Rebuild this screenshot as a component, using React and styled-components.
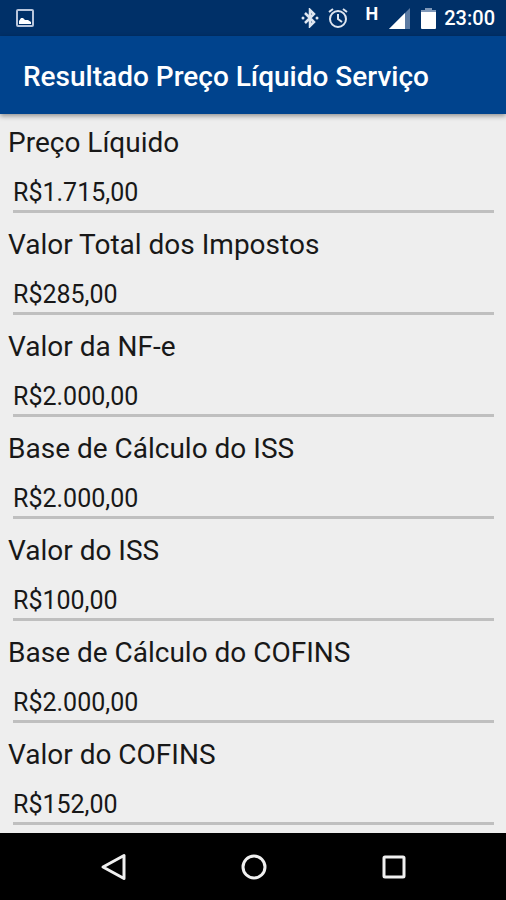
import React from "react";
import styled, { createGlobalStyle } from "styled-components";

const GlobalStyle = createGlobalStyle`
  * {
    box-sizing: border-box;
  }
  body {
    margin: 0;
    background: #eeeeee;
    font-family: Roboto, "Liberation Sans", sans-serif;
  }
`;
const Page = styled.div`
  min-height: 100vh;
  display: flex;
  flex-direction: column;
`;
const StatusBar = styled.div`
  height: 36px;
  padding: 0 11px 0 16px;
  background: #003068;
  color: #ffffff;
  display: flex;
  align-items: center;
  justify-content: space-between;
  svg {
    display: block;
  }
`;
const StatusIcons = styled.div`
  display: flex;
  align-items: center;
`;
const Alarm = styled.div`
  margin-left: 8px;
`;
const Signal = styled.div`
  display: flex;
  align-items: flex-start;
  gap: 11px;
  margin: 0 11px 0 17px;
`;
const Network = styled.span`
  font-size: 18px;
  line-height: 12px;
  font-weight: 700;
`;
const Clock = styled.span`
  margin-left: 8px;
  font-size: 20px;
  line-height: 24px;
  font-weight: 500;
`;
const AppBar = styled.header`
  height: 78px;
  padding: 4px 23px 0;
  background: #00438d;
  box-shadow: 0 2px 5px rgba(0, 0, 0, 0.4);
  display: flex;
  align-items: center;
`;
const Title = styled.h1`
  margin: 0;
  color: #ffffff;
  font-size: 28px;
  line-height: 36px;
  font-weight: 500;
`;
const Results = styled.main`
  flex: 1;
  padding: 11px 8px 8px;
  display: flex;
  flex-direction: column;
  gap: 14px;
`;
const Field = styled.div`
  display: flex;
  flex-direction: column;
`;
const Label = styled.label`
  color: #181818;
  font-size: 28px;
  line-height: 36px;
`;
const Value = styled.input`
  height: 52px;
  margin: 0 4px 0 5px;
  padding: 13px 0 0;
  border: 0;
  border-bottom: 3px solid #bfbfbf;
  border-radius: 0;
  outline: none;
  background: transparent;
  color: #181818;
  font-family: inherit;
  font-size: 25px;
`;
const NavBar = styled.nav`
  height: 67px;
  padding: 0 42px 0 44px;
  background: #000000;
  display: flex;
`;
const NavButton = styled.button`
  flex: 1;
  padding: 0;
  border: 0;
  background: transparent;
  display: flex;
  align-items: center;
  justify-content: center;
`;

const fields = [
  { id: "precoLiquido", label: "Preço Líquido", value: "R$1.715,00" },
  { id: "totalImpostos", label: "Valor Total dos Impostos", value: "R$285,00" },
  { id: "valorNfe", label: "Valor da NF-e", value: "R$2.000,00" },
  { id: "baseIss", label: "Base de Cálculo do ISS", value: "R$2.000,00" },
  { id: "valorIss", label: "Valor do ISS", value: "R$100,00" },
  { id: "baseCofins", label: "Base de Cálculo do COFINS", value: "R$2.000,00" },
  { id: "valorCofins", label: "Valor do COFINS", value: "R$152,00" },
];

const PictureIcon = () => (
  <svg width="18" height="18" viewBox="0 0 18 18">
    <rect x="1" y="1" width="16" height="16" rx="1" fill="none" stroke="#b9c6dc" strokeWidth="2" />
    <path d="M3 15v-3l2-3 2 0 2 2 3 0 3 2v2z" fill="#ffffff" />
  </svg>
);

const BluetoothIcon = () => (
  <svg width="18" height="20" viewBox="0 0 18 20">
    <path d="M4 5l9 9-4 4V2l4 4-9 9" fill="none" stroke="#dfe6f0" strokeWidth="2.500" />
    <circle cx="2" cy="10" r="1.500" fill="#dfe6f0" />
    <circle cx="16" cy="10" r="1.500" fill="#dfe6f0" />
  </svg>
);

const AlarmIcon = () => (
  <svg width="22" height="22" viewBox="0 0 22 22" fill="none" stroke="#dfe6f0" strokeWidth="2">
    <circle cx="11" cy="12" r="8" />
    <path d="M11 7v5l4 3M2 5l4-3M20 5l-4-3" />
  </svg>
);

const SignalIcon = () => (
  <svg width="21" height="21" viewBox="0 0 21 21">
    <path d="M0 21L21 0v21z" fill="#5c7ba3" />
    <path d="M0 21L16 5v16z" fill="#ffffff" />
  </svg>
);

const BatteryIcon = () => (
  <svg width="15" height="21" viewBox="0 0 15 21">
    <path d="M4 0h7v2h4v4H0V2h4z" fill="#8098b8" />
    <path d="M0 4h15v16q0 1-1 1H1q-1 0-1-1z" fill="#ffffff" />
  </svg>
);

const NavIcon = ({ children }) => (
  <svg width="28" height="28" viewBox="0 0 28 28" fill="none" stroke="#f0f0f0" strokeWidth="3">
    {children}
  </svg>
);

const App = () => {
  return (
    <Page>
      <GlobalStyle />
      <StatusBar>
        <PictureIcon />
        <StatusIcons>
          <BluetoothIcon />
          <Alarm>
            <AlarmIcon />
          </Alarm>
          <Signal>
            <Network>H</Network>
            <SignalIcon />
          </Signal>
          <BatteryIcon />
          <Clock>23:00</Clock>
        </StatusIcons>
      </StatusBar>
      <AppBar>
        <Title>Resultado Preço Líquido Serviço</Title>
      </AppBar>
      <Results>
        {fields.map((field) => (
          <Field key={field.id}>
            <Label htmlFor={field.id}>{field.label}</Label>
            <Value id={field.id} name={field.id} value={field.value} readOnly />
          </Field>
        ))}
      </Results>
      <NavBar>
        <NavButton type="button" aria-label="Voltar">
          <NavIcon>
            <path d="M3 14L24 2.500V25.500z" strokeLinejoin="round" />
          </NavIcon>
        </NavButton>
        <NavButton type="button" aria-label="Início">
          <NavIcon>
            <circle cx="14" cy="14" r="11" />
          </NavIcon>
        </NavButton>
        <NavButton type="button" aria-label="Recentes">
          <NavIcon>
            <rect x="4" y="4" width="20" height="20" rx="1" />
          </NavIcon>
        </NavButton>
      </NavBar>
    </Page>
  );
};

export default App;
